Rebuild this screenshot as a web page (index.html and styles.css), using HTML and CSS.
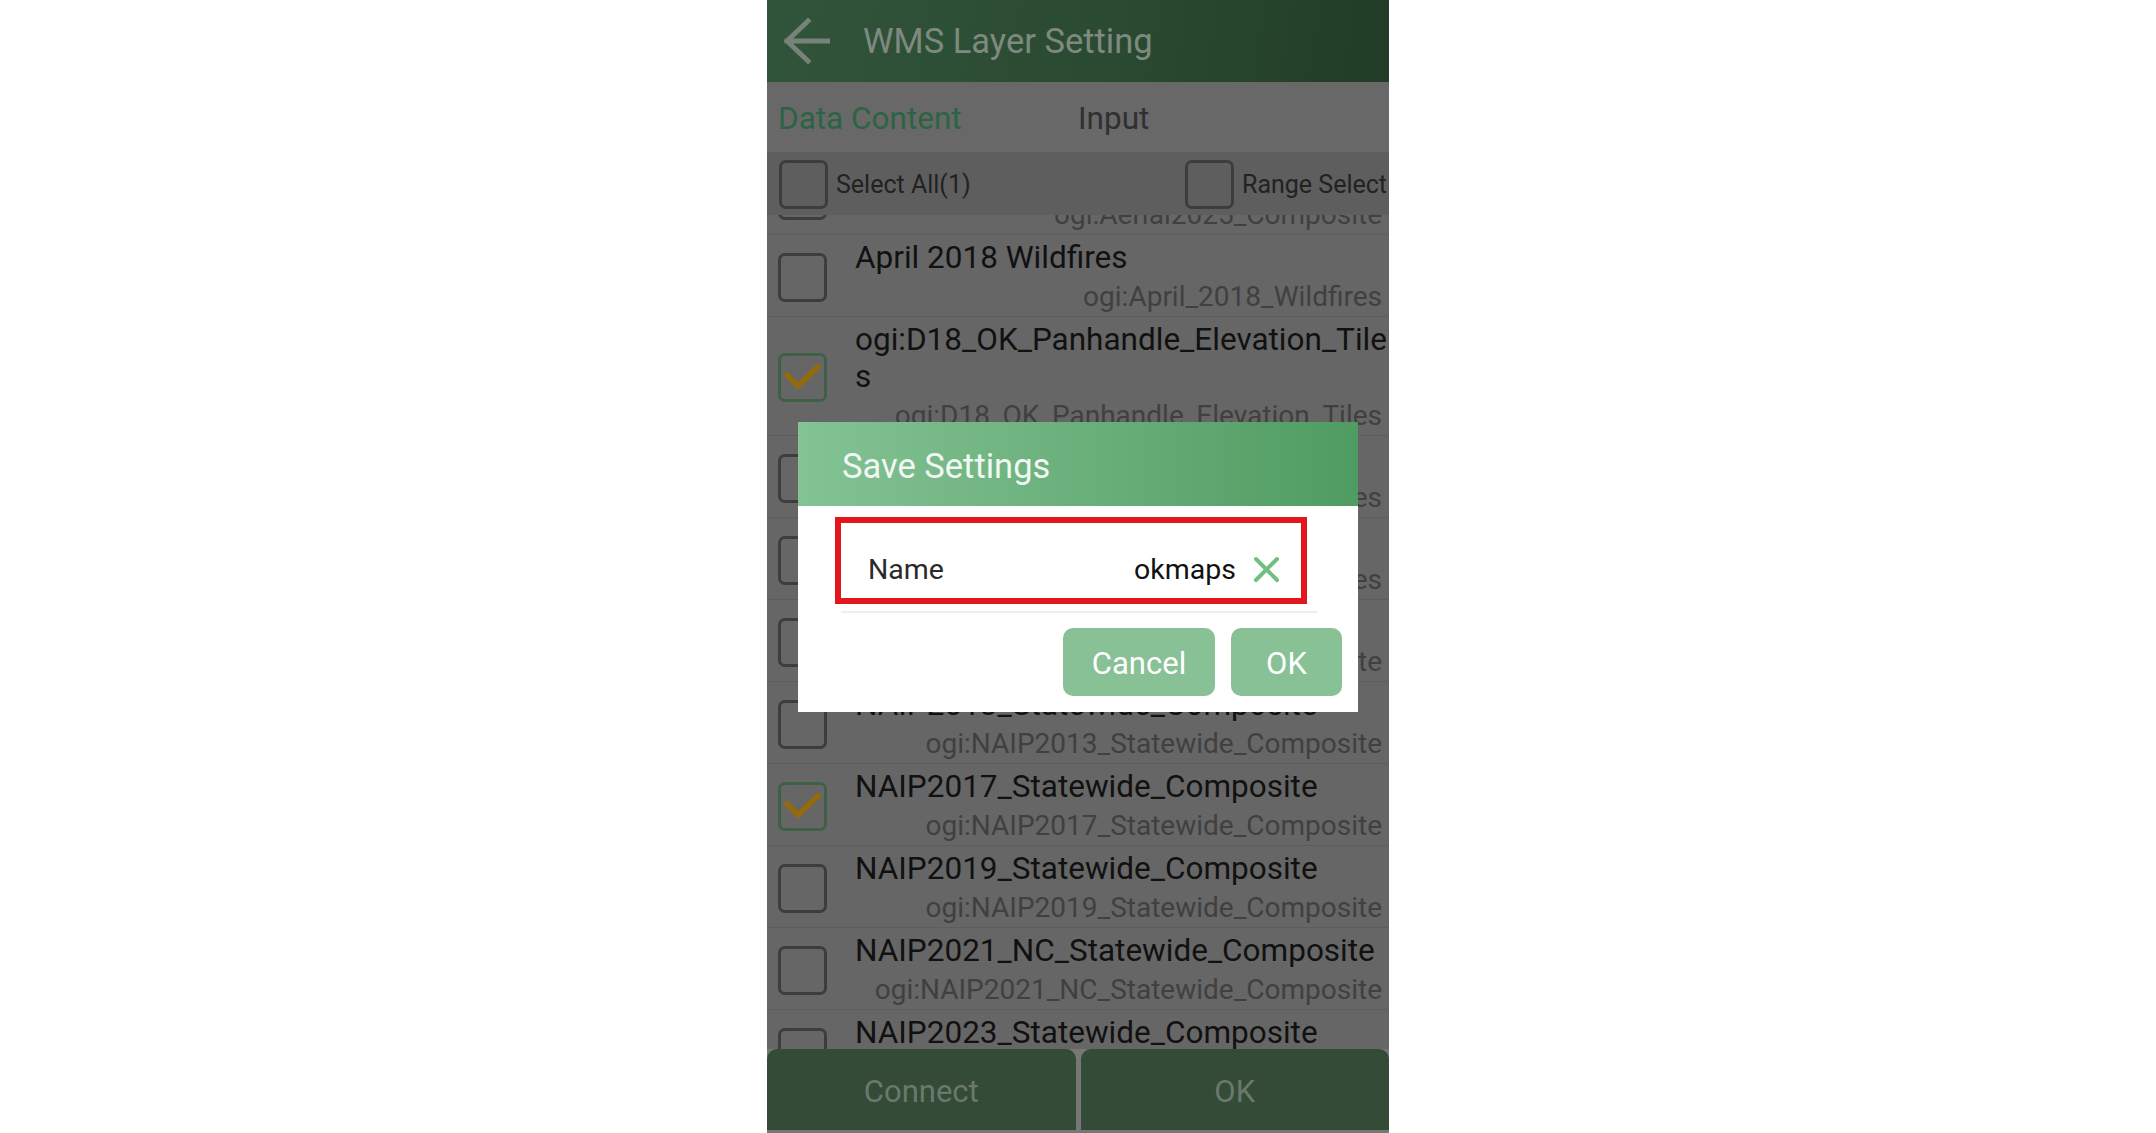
FILE: index.html
```html
<!DOCTYPE html>
<html lang="en">
<head>
<meta charset="utf-8">
<title>WMS Layer Setting</title>
<link rel="stylesheet" href="styles.css">
</head>
<body>
<div class="screen">
  <div class="phone">
    <header class="appbar">
      <svg class="back" viewBox="0 0 46 46" aria-hidden="true">
        <path d="M3 23 H44 M24 3 L3 23 L24 43" fill="none" stroke="currentColor" stroke-width="5" stroke-linecap="square" stroke-linejoin="miter"/>
      </svg>
      <h1 class="appbar-title">WMS Layer Setting</h1>
    </header>

    <nav class="tabs">
      <span class="tab tab-active">Data Content</span>
      <span class="tab">Input</span>
    </nav>

    <div class="select-bar">
      <label class="select-opt"><span class="cb"></span><span>Select All(1)</span></label>
      <label class="select-opt"><span class="cb"></span><span>Range Select</span></label>
    </div>

    <div class="layer-list">
      <ul class="layers">
        <li class="layer">
          <span class="cb"></span>
          <div class="layer-text">
            <div class="layer-title">Aerial2025_Composite</div>
            <div class="layer-name">ogi:Aerial2025_Composite</div>
          </div>
        </li>
        <li class="layer">
          <span class="cb"></span>
          <div class="layer-text">
            <div class="layer-title">April 2018 Wildfires</div>
            <div class="layer-name">ogi:April_2018_Wildfires</div>
          </div>
        </li>
        <li class="layer">
          <span class="cb cb-on"><svg viewBox="0 0 49 49"><path d="M9 22 L20 33 L40 14" fill="none" stroke="#946b0a" stroke-width="5.5" stroke-linecap="round" stroke-linejoin="round"/></svg></span>
          <div class="layer-text">
            <div class="layer-title">ogi:D18_OK_Panhandle_Elevation_Tiles</div>
            <div class="layer-name">ogi:D18_OK_Panhandle_Elevation_Tiles</div>
          </div>
        </li>
        <li class="layer">
          <span class="cb"></span>
          <div class="layer-text">
            <div class="layer-title">Hillshade Tiles</div>
            <div class="layer-name">ogi:Hillshade_Tiles</div>
          </div>
        </li>
        <li class="layer">
          <span class="cb"></span>
          <div class="layer-text">
            <div class="layer-title">LiDAR Elevation Tiles</div>
            <div class="layer-name">ogi:LiDAR_Elevation_Tiles</div>
          </div>
        </li>
        <li class="layer">
          <span class="cb"></span>
          <div class="layer-text">
            <div class="layer-title">NAIP2010_Statewide_Composite</div>
            <div class="layer-name">ogi:NAIP2010_Statewide_Composite</div>
          </div>
        </li>
        <li class="layer">
          <span class="cb"></span>
          <div class="layer-text">
            <div class="layer-title">NAIP2013_Statewide_Composite</div>
            <div class="layer-name">ogi:NAIP2013_Statewide_Composite</div>
          </div>
        </li>
        <li class="layer">
          <span class="cb cb-on"><svg viewBox="0 0 49 49"><path d="M9 22 L20 33 L40 14" fill="none" stroke="#946b0a" stroke-width="5.5" stroke-linecap="round" stroke-linejoin="round"/></svg></span>
          <div class="layer-text">
            <div class="layer-title">NAIP2017_Statewide_Composite</div>
            <div class="layer-name">ogi:NAIP2017_Statewide_Composite</div>
          </div>
        </li>
        <li class="layer">
          <span class="cb"></span>
          <div class="layer-text">
            <div class="layer-title">NAIP2019_Statewide_Composite</div>
            <div class="layer-name">ogi:NAIP2019_Statewide_Composite</div>
          </div>
        </li>
        <li class="layer">
          <span class="cb"></span>
          <div class="layer-text">
            <div class="layer-title">NAIP2021_NC_Statewide_Composite</div>
            <div class="layer-name">ogi:NAIP2021_NC_Statewide_Composite</div>
          </div>
        </li>
        <li class="layer">
          <span class="cb"></span>
          <div class="layer-text">
            <div class="layer-title">NAIP2023_Statewide_Composite</div>
            <div class="layer-name">ogi:NAIP2023_Statewide_Composite</div>
          </div>
        </li>
      </ul>
    </div>

    <footer class="actions">
      <button class="action">Connect</button>
      <button class="action">OK</button>
    </footer>

    <div class="dialog" role="dialog" aria-label="Save Settings">
      <div class="dialog-head">Save Settings</div>
      <div class="dialog-body">
        <div class="field">
          <span class="field-label">Name</span>
          <span class="field-value">okmaps</span>
          <svg class="clear" viewBox="0 0 27 27" aria-hidden="true">
            <path d="M3 3 L24 24 M24 3 L3 24" stroke="#6fc080" stroke-width="4" stroke-linecap="round"/>
          </svg>
        </div>
        <div class="divider"></div>
        <div class="dialog-buttons">
          <button class="btn btn-cancel">Cancel</button>
          <button class="btn btn-ok">OK</button>
        </div>
      </div>
    </div>
  </div>
</div>
</body>
</html>
```

FILE: styles.css
```css
* { box-sizing: border-box; }

body {
  margin: 0;
  background: #ffffff;
  font-family: Roboto, "Noto Sans", "Liberation Sans", sans-serif;
}

.screen {
  display: flex;
  justify-content: center;
}

.phone {
  position: relative;
  width: 622px;
  height: 1133px;
  display: flex;
  flex-direction: column;
  overflow: hidden;
  background: #666666;
}

/* top app bar */
.appbar {
  flex: none;
  height: 82px;
  display: flex;
  align-items: center;
  gap: 33px;
  padding-left: 17px;
  background: linear-gradient(100deg, #31553a 0%, #2a4a31 55%, #223c27 100%);
}

.back {
  width: 46px;
  height: 46px;
  color: #77827a;
  flex: none;
}

.appbar-title {
  margin: 0;
  font-size: 34.5px;
  font-weight: 400;
  color: #7e8980;
  white-space: nowrap;
}

/* tabs */
.tabs {
  flex: none;
  height: 70px;
  display: flex;
  align-items: center;
  padding: 3px 0 0 11px;
  background: #686868;
  font-size: 31.5px;
  color: #303030;
}

.tab {
  width: 300px;
  white-space: nowrap;
}

.tab-active {
  color: #2b6443;
}

/* select all / range select */
.select-bar {
  flex: none;
  height: 63px;
  display: flex;
  align-items: center;
  padding: 2px 0 0 12px;
  background: #5e5e5e;
  font-size: 25px;
  color: #222222;
  white-space: nowrap;
  position: relative;
  z-index: 1;
}

.select-opt {
  display: flex;
  align-items: center;
  gap: 8px;
}

.select-opt:first-child {
  width: 406px;
}

/* checkbox */
.cb {
  flex: none;
  width: 49px;
  height: 49px;
  border: 3px solid #3d3d3d;
  border-radius: 7px;
  display: flex;
  align-items: center;
  justify-content: center;
}

.cb svg {
  width: 49px;
  height: 49px;
  flex: none;
}

.cb-on {
  border-color: #3f6046;
}

/* layer list, scrolled so the first row is partly hidden */
.layer-list {
  flex: 1;
  min-height: 0;
  overflow: hidden;
}

.layers {
  list-style: none;
  margin: -62px 0 0;
  padding: 0;
}

.layer {
  display: flex;
  align-items: center;
  padding: 4px 0 1px 11px;
  border-bottom: 1px solid #5d5d5d;
}

.layer-text {
  flex: 1;
  min-width: 0;
  margin-left: 28px;
  padding-right: 2px;
}

.layer-title {
  font-size: 31.5px;
  line-height: 37px;
  color: #111111;
  word-break: break-all;
}

.layer-name {
  margin-top: 2px;
  font-size: 28px;
  line-height: 37px;
  color: #404040;
  text-align: right;
  padding-right: 5px;
  white-space: nowrap;
}

/* bottom actions */
.actions {
  flex: none;
  height: 84px;
  display: flex;
  gap: 5px;
  padding-bottom: 3px;
  background: #777777;
}

.action {
  flex: 1;
  border: 0;
  border-radius: 10px 10px 0 0;
  padding-top: 4px;
  background: #344b37;
  font-family: inherit;
  font-size: 31px;
  color: #6b796d;
}

/* save dialog */
.dialog {
  position: absolute;
  left: 31px;
  top: 422px;
  width: 560px;
  background: #ffffff;
  z-index: 2;
}

.dialog-head {
  height: 84px;
  display: flex;
  align-items: center;
  padding: 3px 0 0 44px;
  background: linear-gradient(90deg, #83c394 0%, #68ae79 55%, #4f9c62 100%);
  font-size: 34.5px;
  color: #f1f7f2;
}

.dialog-body {
  padding: 11px 16px 16px 37px;
}

.field {
  width: 472px;
  height: 87px;
  border: 6px solid #e3161e;
  display: flex;
  align-items: center;
  gap: 17px;
  padding: 20px 21px 3px 27px;
  font-size: 28.5px;
}

.field-label {
  flex: 1;
  color: #2a2a2a;
}

.field-value {
  color: #111111;
}

.clear {
  width: 27px;
  height: 27px;
  flex: none;
}

.divider {
  width: 476px;
  height: 2px;
  margin: 7px 0 0 6px;
  background: #eeeeee;
}

.dialog-buttons {
  display: flex;
  justify-content: flex-end;
  gap: 16px;
  margin-top: 15px;
}

.btn {
  height: 68px;
  border: 0;
  border-radius: 10px;
  padding-top: 3px;
  background: #88c196;
  font-family: inherit;
  font-size: 31px;
  color: #ffffff;
}

.btn-cancel { width: 152px; }
.btn-ok { width: 111px; }
```
